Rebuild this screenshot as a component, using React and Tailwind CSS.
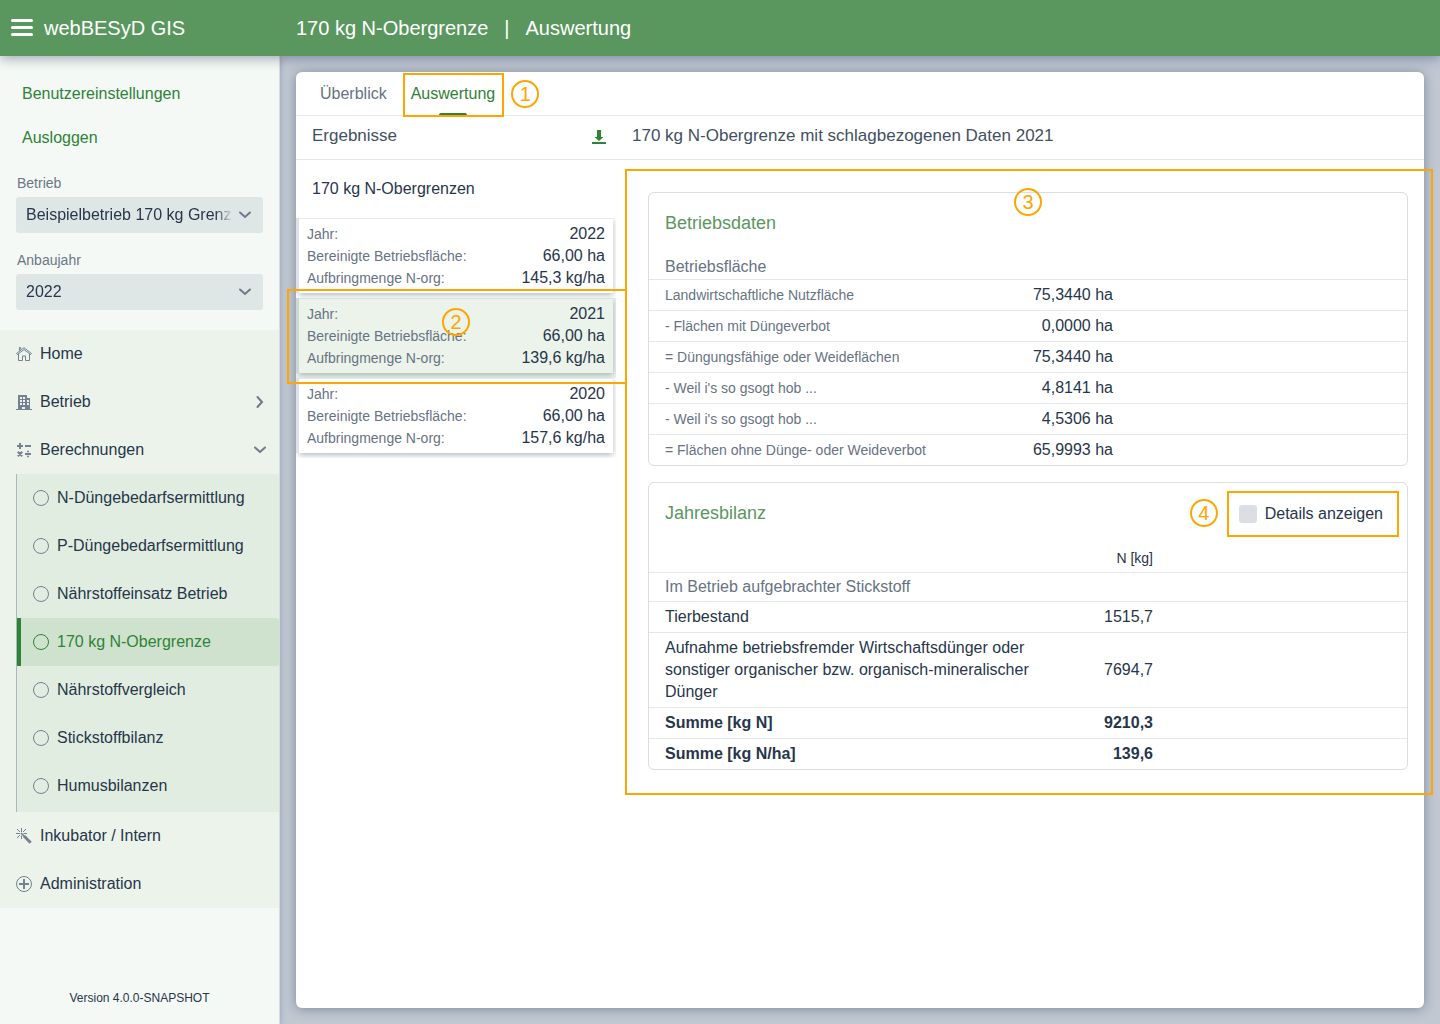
import React from "react";

const HomeIcon = () => (
  <svg viewBox="0 0 16 16" className="h-4 w-4 shrink-0" fill="none" stroke="currentColor" aria-hidden="true">
    <path d="M.6 7.400 8 1.700l7.400 5.700-.8 1.100L8 3.600 1.400 8.500z" />
    <path d="M2.500 8v6.500h4V10h3v4.500h4V8" />
    <path d="M3.400 4.800V1.500h1.300v2" />
  </svg>
);

const BuildingIcon = () => (
  <svg viewBox="0 0 16 16" className="h-4 w-4 shrink-0" fill="currentColor" aria-hidden="true">
    <path
      fillRule="evenodd"
      d="M0 15h2V1h9v3h3v11h2v1H0zM4 3v2h2V3zm3 0v2h2V3zM4 6v2h2V6zm3 0v2h2V6zM4 9v2h2V9zm3 0v2h2V9zm4-3v2h2V6zm0 3v2h2V9zM6 13v2h3v-2z"
    />
  </svg>
);

const CalcIcon = () => (
  <svg viewBox="0 0 16 16" className="h-4 w-4 shrink-0" aria-hidden="true">
    <g fill="none" stroke="currentColor" strokeWidth="2">
      <path d="M4 1v6M1 4h6M9 4h6M9 12h6M1.800 9.800l4.400 4.400M6.200 9.800l-4.400 4.400" />
    </g>
    <g fill="currentColor">
      <circle cx="12" cy="9.500" r="1" />
      <circle cx="12" cy="14.500" r="1" />
    </g>
  </svg>
);

const MagicIcon = () => (
  <svg viewBox="0 0 16 16" className="h-4 w-4 shrink-0" fill="none" stroke="currentColor" aria-hidden="true">
    <path d="M5.500 0v4M5.500 7.500v3.500M0 5.500h4M7.500 5.500H11M1 1l3 3M1 10l3-3M10 1 7 4" />
    <path d="m5 5 4 4" strokeWidth="1.600" />
    <path d="m8 8 6.700 6.700" strokeWidth="3" />
  </svg>
);

const PlusCircleIcon = () => (
  <svg viewBox="0 0 16 16" className="h-4 w-4 shrink-0" fill="none" stroke="currentColor" aria-hidden="true">
    <circle cx="8" cy="8" r="7.500" />
    <path d="M8 3v10M3 8h10" strokeWidth="2" />
  </svg>
);

const CircleIcon = () => (
  <svg viewBox="0 0 16 16" className="h-4 w-4 shrink-0" fill="none" stroke="currentColor" aria-hidden="true">
    <circle cx="8" cy="8" r="7.500" />
  </svg>
);

const DownloadIcon = () => (
  <svg viewBox="0 0 14 14" className="h-[14px] w-[14px]" fill="currentColor" aria-hidden="true">
    <path d="M5 0h4v7h2.500L7 11 2.500 7H5zM0 12h14v2H0z" />
  </svg>
);

const ChevronDown = ({ className = "" }) => (
  <svg viewBox="0 0 14 14" className={`h-[14px] w-[14px] ${className}`} fill="none" stroke="currentColor" strokeWidth="2" strokeLinecap="round" aria-hidden="true">
    <path d="m2 4.500 5 4.500 5-4.500" />
  </svg>
);

const ChevronRight = () => (
  <svg viewBox="0 0 14 14" className="h-[14px] w-[14px]" fill="none" stroke="currentColor" strokeWidth="2" strokeLinecap="round" aria-hidden="true">
    <path d="M4.500 2 9 7l-4.500 5" />
  </svg>
);

// Numbered circle of the guided tour
const Marker = ({ n, className }) => (
  <span
    className={`absolute z-20 flex h-7 w-7 items-center justify-center rounded-full border-2 border-[#ffa500] text-xl leading-none text-[#ffa500] ${className}`}
  >
    {n}
  </span>
);

const Highlight = ({ className }) => (
  <span className={`pointer-events-none absolute z-10 border-2 border-[#ffa500] ${className}`} />
);

const SelectField = ({ id, label, options }) => (
  <div>
    <label htmlFor={id} className="block pl-px text-sm leading-7 text-[#6b7686]">
      {label}
    </label>
    <div className="relative h-9 rounded-[3px] bg-[#dee6e6]">
      <select
        id={id}
        className="h-9 w-full appearance-none bg-transparent pr-8 pl-[10px] text-base text-[#27364a] outline-none [mask-image:linear-gradient(to_left,transparent_30px,black_48px)]"
      >
        {options.map((option) => (
          <option key={option}>{option}</option>
        ))}
      </select>
      <ChevronDown className="pointer-events-none absolute top-[11px] right-[11px] text-[#6f7a89]" />
    </div>
  </div>
);

const calculations = [
  "N-Düngebedarfsermittlung",
  "P-Düngebedarfsermittlung",
  "Nährstoffeinsatz Betrieb",
  "170 kg N-Obergrenze",
  "Nährstoffvergleich",
  "Stickstoffbilanz",
  "Humusbilanzen",
];

const NavItem = ({ icon, label, arrow }) => (
  <a href="#" className="flex h-12 items-center gap-2 pr-3 pl-4">
    <span className="text-[#75818e]">{icon}</span>
    <span className="flex-1">{label}</span>
    {arrow && <span className="text-[#6f7a89]">{arrow}</span>}
  </a>
);

const Sidebar = () => (
  <aside className="relative z-10 flex w-[280px] shrink-0 flex-col border-r border-[#d5dde0] bg-[#f4f9f5] shadow-[0_0_6px_rgba(40,60,95,0.3)]">
    <div className="flex flex-col px-[22px] pt-4 text-base leading-[44px] text-[#2f8237]">
      <a href="#">Benutzereinstellungen</a>
      <a href="#">Ausloggen</a>
    </div>
    <div className="flex flex-col gap-[13px] px-4 pt-[9px] pb-5">
      <SelectField id="betrieb" label="Betrieb" options={["Beispielbetrieb 170 kg Grenze"]} />
      <SelectField id="anbaujahr" label="Anbaujahr" options={["2022", "2021", "2020"]} />
    </div>
    <nav className="bg-[#ebf3eb] text-base text-[#27364a]">
      <NavItem icon={<HomeIcon />} label="Home" />
      <NavItem icon={<BuildingIcon />} label="Betrieb" arrow={<ChevronRight />} />
      <NavItem icon={<CalcIcon />} label="Berechnungen" arrow={<ChevronDown />} />
      <div className="ml-4 border-l border-[#a9b8bd] bg-[#e1ede1] pb-[2px]">
        {calculations.map((name) => {
          const active = name === "170 kg N-Obergrenze";
          return (
            <a
              key={name}
              href="#"
              className={`flex h-12 items-center gap-2 rounded-r-[3px] border-l-4 pl-3 ${
                active ? "border-[#2f8237] bg-[#cfe2ce] text-[#2f8237]" : "border-transparent"
              }`}
            >
              <span className={active ? "" : "text-[#75818e]"}>
                <CircleIcon />
              </span>
              {name}
            </a>
          );
        })}
      </div>
      <NavItem icon={<MagicIcon />} label="Inkubator / Intern" />
      <NavItem icon={<PlusCircleIcon />} label="Administration" />
    </nav>
    <footer className="mt-auto pb-[18px] text-center text-xs text-[#27364a]">Version 4.0.0-SNAPSHOT</footer>
  </aside>
);

const results = [
  { year: "2022", area: "66,00 ha", amount: "145,3 kg/ha" },
  { year: "2021", area: "66,00 ha", amount: "139,6 kg/ha", selected: true },
  { year: "2020", area: "66,00 ha", amount: "157,6 kg/ha" },
];

const ResultRow = ({ label, value }) => (
  <div className="flex justify-between leading-[22px]">
    <dt className="text-sm leading-[22px] text-[#677383]">{label}</dt>
    <dd>{value}</dd>
  </div>
);

const ResultItem = ({ result }) => (
  <li className="relative">
    <div className={`overflow-hidden px-[3px] pb-[5px] ${result.selected ? "bg-[#ebf3eb]" : "bg-white"}`}>
      <dl
        className={`border-t px-2 py-1 ${
          result.selected
            ? "border-[#d9e1dd] bg-[#ebf3eb] shadow-[-3px_0_0_#cdd7d5,0_2px_6px_rgba(35,55,80,0.35)]"
            : "border-[#e6e9ec] bg-white shadow-[-3px_0_0_#dde1e6,0_2px_6px_rgba(35,55,80,0.35)]"
        }`}
      >
        <ResultRow label="Jahr:" value={result.year} />
        <ResultRow label="Bereinigte Betriebsfläche:" value={result.area} />
        <ResultRow label="Aufbringmenge N-org:" value={result.amount} />
      </dl>
    </div>
    {result.selected && (
      <>
        <Highlight className="-top-[9px] -right-[11px] -bottom-[6px] -left-[9px]" />
        <Marker n={2} className="top-[10px] left-[146px]" />
      </>
    )}
  </li>
);

const areas = [
  ["Landwirtschaftliche Nutzfläche", "75,3440 ha"],
  ["- Flächen mit Düngeverbot", "0,0000 ha"],
  ["= Düngungsfähige oder Weideflächen", "75,3440 ha"],
  ["- Weil i's so gsogt hob ...", "4,8141 ha"],
  ["- Weil i's so gsogt hob ...", "4,5306 ha"],
  ["= Flächen ohne Dünge- oder Weideverbot", "65,9993 ha"],
];

const FarmData = () => (
  <section className="rounded-md border border-[#d9dee2]">
    <h2 className="px-4 pt-4 text-lg text-[#5a975e]">Betriebsdaten</h2>
    <table className="mt-[18px] w-full table-fixed">
      <caption className="px-4 text-left leading-6 text-[#677383]">Betriebsfläche</caption>
      <colgroup>
        <col className="w-[360px]" />
        <col className="w-[120px]" />
        <col />
      </colgroup>
      <tbody>
        {areas.map(([name, value], index) => (
          <tr key={index} className="border-t border-[#e5e8eb] leading-[22px]">
            <th scope="row" className="py-1 pl-4 text-left text-sm leading-[22px] font-normal text-[#677383]">
              {name}
            </th>
            <td className="py-1 pr-4 text-right">{value}</td>
            <td />
          </tr>
        ))}
      </tbody>
    </table>
  </section>
);

const balance = [
  { name: "Tierbestand", value: "1515,7" },
  {
    name: "Aufnahme betriebsfremder Wirtschaftsdünger oder sonstiger organischer bzw. organisch-mineralischer Dünger",
    value: "7694,7",
  },
  { name: "Summe [kg N]", value: "9210,3", total: true },
  { name: "Summe [kg N/ha]", value: "139,6", total: true },
];

const AnnualBalance = () => (
  <section className="rounded-md border border-[#d9dee2]">
    <div className="flex items-start justify-between">
      <h2 className="px-4 pt-4 text-lg text-[#5a975e]">Jahresbilanz</h2>
      <label className="relative mt-2 mr-2 flex h-[46px] items-center gap-2 pr-4 pl-3">
        <input type="checkbox" className="h-[18px] w-[18px] appearance-none rounded-[3px] bg-[#dbdfe4]" />
        Details anzeigen
        <Highlight className="inset-0" />
        <Marker n={4} className="top-2 -left-[37px]" />
      </label>
    </div>
    <table className="w-full table-fixed">
      <colgroup>
        <col className="w-[400px]" />
        <col className="w-[120px]" />
        <col />
      </colgroup>
      <thead>
        <tr>
          <td />
          <th scope="col" className="pt-[10px] pr-4 pb-[3px] text-right text-sm leading-[22px] font-normal">
            N [kg]
          </th>
          <td />
        </tr>
      </thead>
      <tbody>
        <tr className="border-t border-[#e5e8eb] leading-[22px]">
          <th scope="colgroup" colSpan={3} className="px-4 py-[3px] text-left font-normal text-[#677383]">
            Im Betrieb aufgebrachter Stickstoff
          </th>
        </tr>
        {balance.map((row) => (
          <tr key={row.name} className="border-t border-[#e5e8eb] leading-[22px]">
            <th scope="row" className={`px-4 py-1 text-left ${row.total ? "font-bold" : "font-normal"}`}>
              {row.name}
            </th>
            <td className={`py-1 pr-4 text-right ${row.total ? "font-bold" : "font-normal"}`}>{row.value}</td>
            <td />
          </tr>
        ))}
      </tbody>
    </table>
  </section>
);

const App = () => {
  return (
    <div className="flex min-h-screen flex-col bg-[#c1c8d2] font-['Liberation_Sans',Arial,sans-serif] text-base text-[#27364a]">
      <header className="relative z-20 flex h-14 items-center bg-[#5a975e] text-xl text-white shadow-[0_2px_12px_rgba(40,50,90,0.45)]">
        <div className="flex w-[296px] shrink-0 items-center gap-[11px] pl-[11px]">
          <button type="button" aria-label="Menü" className="flex h-[18px] w-[22px] flex-col gap-1">
            <span className="h-[3px] w-full rounded-sm bg-white" />
            <span className="h-[3px] w-full rounded-sm bg-white" />
            <span className="h-[3px] w-full rounded-sm bg-white" />
          </button>
          <span>webBESyD GIS</span>
        </div>
        <h1 className="flex gap-4">
          <span>170 kg N-Obergrenze</span>
          <span>|</span>
          <span>Auswertung</span>
        </h1>
      </header>

      <div className="flex flex-1">
        <Sidebar />

        <main className="flex min-w-0 flex-1 flex-col p-4">
          <div className="flex-1 rounded-md bg-white shadow-[0_1px_12px_rgba(40,60,85,0.45)]">
            {/* Tabs */}
            <nav className="flex h-11 items-stretch border-b border-[#e5e8eb] px-3">
              <a href="#" className="flex items-center px-3 text-[#677383]">
                Überblick
              </a>
              <a href="#" className="relative flex items-center px-3 text-[#2f8237]">
                Auswertung
                <span className="absolute bottom-0 left-1/2 h-[2px] w-7 -translate-x-1/2 rounded-t-full bg-[#2f8237]" />
                <Highlight className="top-px right-[3px] -bottom-[2px] left-1" />
                <Marker n={1} className="top-2 -right-8" />
              </a>
            </nav>

            {/* Titles of both columns */}
            <div className="flex h-11 items-center border-b border-[#e5e8eb] pb-1 text-[17px] text-[#435062]">
              <div className="flex w-80 shrink-0 items-center justify-between pr-[10px] pl-4">
                <h2>Ergebnisse</h2>
                <button type="button" aria-label="Herunterladen" className="pt-[2px] text-[#2f8237]">
                  <DownloadIcon />
                </button>
              </div>
              <h2 className="px-4">170 kg N-Obergrenze mit schlagbezogenen Daten 2021</h2>
            </div>

            <div className="flex items-start">
              <section className="w-80 shrink-0">
                <h3 className="px-4 leading-[58px]">170 kg N-Obergrenzen</h3>
                <ul>
                  {results.map((result) => (
                    <ResultItem key={result.year} result={result} />
                  ))}
                </ul>
              </section>

              <div className="relative flex min-w-0 flex-1 flex-col gap-4 pt-8 pr-4 pb-4 pl-8">
                <FarmData />
                <AnnualBalance />
                <Highlight className="top-[9px] -right-[9px] -bottom-[9px] left-[9px]" />
                <Marker n={3} className="top-7 left-[398px]" />
              </div>
            </div>
          </div>
        </main>
      </div>
    </div>
  );
};

export default App;
